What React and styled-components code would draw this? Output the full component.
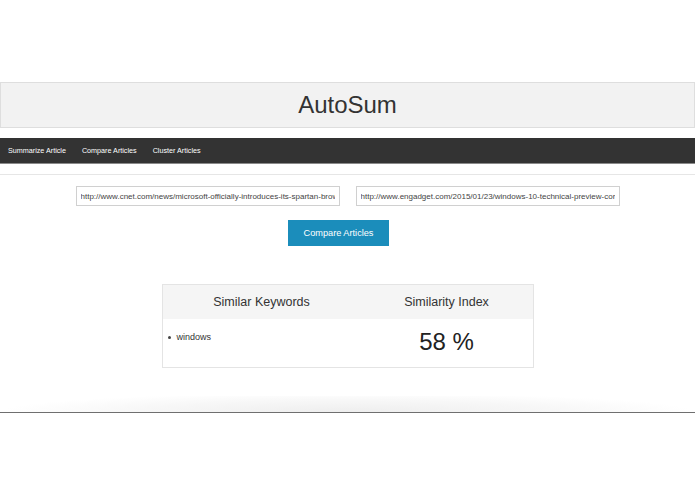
import React from 'react';
import styled, { createGlobalStyle } from 'styled-components';

const GlobalStyle = createGlobalStyle`
  html, body {
    margin: 0;
    padding: 0;
    background: #fff;
  }
  body {
    font-family: "Liberation Sans", Arial, Helvetica, sans-serif;
    color: #333;
  }
`;

const Page = styled.div`
  width: 695px;
  display: flex;
  flex-direction: column;
`;

const Header = styled.header`
  margin-top: 82px;
  width: 693px;
  height: 44px;
  border: 1px solid #dedede;
  background: #f2f2f2;
  display: flex;
  align-items: center;
  justify-content: center;

  h1 {
    margin: 0;
    font-size: 24px;
    font-weight: 400;
    color: #333;
  }
`;

const NavBar = styled.nav`
  margin-top: 10px;
  height: 25px;
  background: #333;
  border-bottom: 1px solid #8a8a8a;
  display: flex;
  align-items: center;
  gap: 16px;
  padding-left: 8px;
`;

const NavLink = styled.a`
  color: #ffffff;
  font-size: 7.2px;
  text-decoration: none;
  cursor: pointer;
`;

const Divider = styled.hr`
  margin: 10px 0 0;
  border: 0;
  border-top: 1px solid #e6e6e6;
`;

const UrlRow = styled.div`
  margin-top: 11px;
  display: flex;
  justify-content: center;
  gap: 16px;
`;

const UrlInput = styled.input`
  box-sizing: border-box;
  width: ${p => p.$w}px;
  height: 20px;
  padding: 0 4px;
  border: 1px solid #d0d0d0;
  font-family: inherit;
  font-size: 8px;
  color: #444;
  outline: none;
`;

const ButtonRow = styled.div`
  margin-top: 14px;
  display: flex;
  justify-content: center;
  padding-right: 18px;
`;

const CompareButton = styled.button`
  width: 101px;
  height: 26px;
  border: none;
  background: #1b8dbb;
  color: #fff;
  font-family: inherit;
  font-size: 9.2px;
  cursor: pointer;
`;

const ResultTable = styled.div`
  margin: 38px auto 0;
  width: 372px;
  box-sizing: border-box;
  border: 1px solid #e4e4e4;
  display: grid;
  grid-template-columns: 198px 1fr;
`;

const HeadCell = styled.div`
  height: 34px;
  background: #f5f5f5;
  display: flex;
  align-items: center;
  justify-content: center;
  font-size: 12.5px;
  color: #333;
`;

const BodyCell = styled.div`
  height: 48px;
  display: flex;
  justify-content: ${p => (p.$center ? 'center' : 'flex-start')};
  align-items: ${p => (p.$center ? 'center' : 'flex-start')};
`;

const KeywordList = styled.ul`
  margin: 13px 0 0;
  padding-left: 14px;
  font-size: 9px;
  color: #333;
  list-style: none;

  li {
    position: relative;
  }

  li::before {
    content: '';
    position: absolute;
    left: -9px;
    top: 4px;
    width: 3px;
    height: 3px;
    border-radius: 50%;
    background: #444;
  }
`;

const Score = styled.div`
  font-size: 24px;
  color: #222;
  margin-top: -2px;
`;

const PageEdge = styled.div`
  margin-top: 28px;
  height: 16px;
  background: radial-gradient(ellipse 50% 120% at 50% 100%, #eeeeee 0%, #f7f7f7 60%, #fff 100%);
  border-bottom: 1px solid #6f6f6f;
`;

export default function App() {
  return (
    <>
      <GlobalStyle />
      <Page>
        <Header>
          <h1>AutoSum</h1>
        </Header>
        <NavBar>
          <NavLink>Summarize Article</NavLink>
          <NavLink>Compare Articles</NavLink>
          <NavLink>Cluster Articles</NavLink>
        </NavBar>
        <Divider />
        <UrlRow>
          <UrlInput
            $w={264}
            readOnly
            value="http://www.cnet.com/news/microsoft-officially-introduces-its-spartan-browser-to-windows-10"
          />
          <UrlInput
            $w={264}
            readOnly
            value="http://www.engadget.com/2015/01/23/windows-10-technical-preview-cortana"
          />
        </UrlRow>
        <ButtonRow>
          <CompareButton>Compare Articles</CompareButton>
        </ButtonRow>
        <ResultTable>
          <HeadCell>Similar Keywords</HeadCell>
          <HeadCell>Similarity Index</HeadCell>
          <BodyCell>
            <KeywordList>
              <li>windows</li>
            </KeywordList>
          </BodyCell>
          <BodyCell $center>
            <Score>58 %</Score>
          </BodyCell>
        </ResultTable>
        <PageEdge />
      </Page>
    </>
  );
}
